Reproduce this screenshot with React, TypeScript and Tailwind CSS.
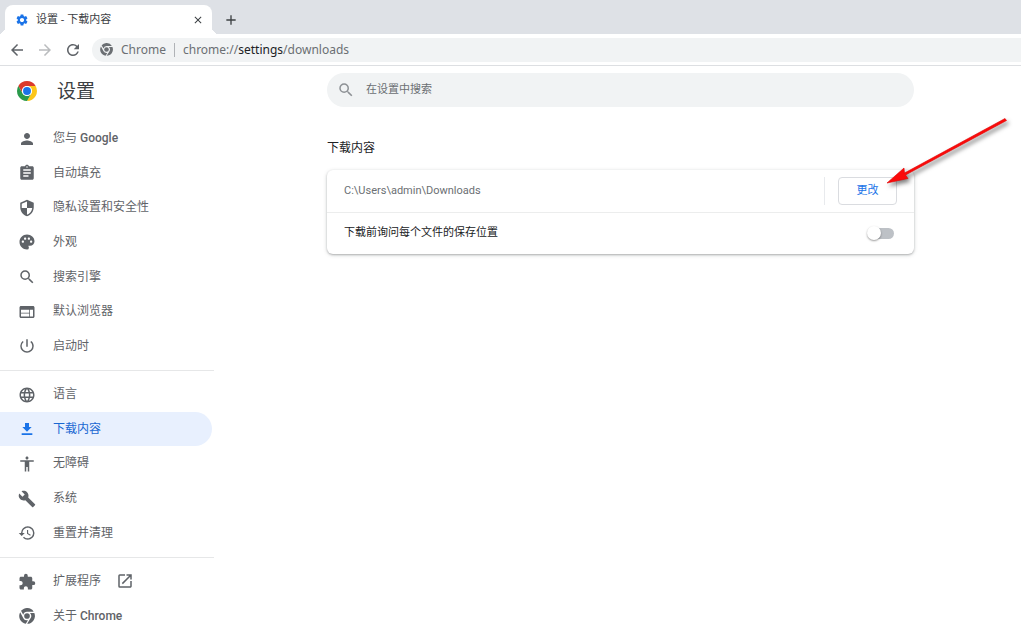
import type { ReactNode } from 'react';
import {
  MdAccessibility,
  MdArrowBack,
  MdArrowForward,
  MdAssignment,
  MdBuild,
  MdExtension,
  MdLanguage,
  MdOpenInNew,
  MdPalette,
  MdPerson,
  MdPowerSettingsNew,
  MdRefresh,
  MdRestore,
  MdSearch,
  MdSecurity,
  MdSettings,
  MdWeb,
  MdAdd,
  MdClose,
} from 'react-icons/md';

function ChromeMono({ className }: { className?: string }) {
  return (
    <svg viewBox="0 0 48 48" fill="currentColor" className={className} aria-hidden="true">
      <path d="M24 11H44A23.5 23.5 0 0 0 6 8.5L12.8 20.3A12 12 0 0 1 24 11Z" />
      <path d="M34.5 31L24.5 47.5A23.5 23.5 0 0 0 46 15H33A13 13 0 0 1 34.5 31Z" />
      <path d="M13 30.5L3.6 12.5A23.5 23.5 0 0 0 20.4 47.2L27 36.7A13 13 0 0 1 13 30.5Z" />
      <circle cx="24" cy="24" r="8.5" />
    </svg>
  );
}

function ChromeLogo() {
  return (
    <svg viewBox="0 0 48 48" className="size-5 shrink-0" aria-hidden="true">
      <circle cx="24" cy="24" r="24" fill="#fff" />
      <path d="M24 12H44.78A24 24 0 0 0 3.22 12L13.61 30A12 12 0 0 1 24 12Z" fill="#db3a2c" />
      <path d="M34.39 30L24 48A24 24 0 0 0 44.78 12H24A12 12 0 0 1 34.39 30Z" fill="#fcc61a" />
      <path d="M13.61 30L3.22 12A24 24 0 0 0 24 48L34.39 30A12 12 0 0 1 13.61 30Z" fill="#2a9a4b" />
      <circle cx="24" cy="24" r="12" fill="#fff" />
      <circle cx="24" cy="24" r="9.5" fill="#1a73e8" />
    </svg>
  );
}

function DownloadIcon({ className }: { className?: string }) {
  return (
    <svg viewBox="0 0 24 24" fill="currentColor" className={className} aria-hidden="true">
      <path d="M19 9h-4V3H9v6H5l7 7 7-7zM4 18.5v2.5h16v-2.5H4z" />
    </svg>
  );
}

type Item = { label: ReactNode; icon: ReactNode; active?: boolean; external?: boolean };

const groups: { height: string; items: Item[] }[] = [
  {
    height: 'min-h-[242px]',
    items: [
      { label: <>您与 <span className="font-medium">Google</span></>, icon: <MdPerson className="size-[18px]" /> },
      { label: '自动填充', icon: <MdAssignment className="size-[18px]" /> },
      { label: '隐私设置和安全性', icon: <MdSecurity className="size-[18px]" /> },
      { label: '外观', icon: <MdPalette className="size-[18px]" /> },
      { label: '搜索引擎', icon: <MdSearch className="size-[18px]" /> },
      { label: '默认浏览器', icon: <MdWeb className="size-[18px]" /> },
      { label: '启动时', icon: <MdPowerSettingsNew className="size-[18px]" /> },
    ],
  },
  {
    height: 'min-h-[173px]',
    items: [
      { label: '语言', icon: <MdLanguage className="size-[18px]" /> },
      { label: '下载内容', icon: <DownloadIcon className="m-px size-4" />, active: true },
      { label: '无障碍', icon: <MdAccessibility className="size-[18px]" /> },
      { label: '系统', icon: <MdBuild className="size-[18px]" /> },
      { label: '重置并清理', icon: <MdRestore className="size-[18px]" /> },
    ],
  },
  {
    height: 'min-h-[69px]',
    items: [
      { label: '扩展程序', icon: <MdExtension className="size-[18px]" />, external: true },
      { label: <>关于 <span className="font-medium">Chrome</span></>, icon: <ChromeMono className="m-px size-4" /> },
    ],
  },
];

function NavItem({ item }: { item: Item }) {
  return (
    <a
      href="#"
      aria-current={item.active ? 'page' : undefined}
      className={
        item.active
          ? 'mr-0.5 flex items-center gap-[17px] rounded-r-full bg-[#e8f0fe] pl-[18px] text-[#1a73e8]'
          : 'mr-0.5 flex items-center gap-[17px] pl-[18px] text-[#5f6368]'
      }
    >
      <span className="mt-px">{item.icon}</span>
      <span className={item.active ? 'text-[#1967d2]' : undefined}>{item.label}</span>
      {item.external && <MdOpenInNew className="-ml-0.5 size-[18px]" />}
    </a>
  );
}

function Pointer() {
  return (
    <svg
      viewBox="880 110 140 84"
      className="pointer-events-none absolute top-[-67px] left-[42px] h-[84px] w-[140px] max-w-none drop-shadow-[2px_3px_2px_rgba(0,0,0,0.5)]"
      aria-hidden="true"
    >
      <path d="M887 183L904 168L904.5 173L1005 118.5L1006.5 120.5L905.5 175L908 178.5Z" fill="#fa0a0a" stroke="#e00000" strokeWidth="0.6" />
    </svg>
  );
}

export default function App() {
  return (
    <div className="min-h-screen overflow-hidden bg-white font-['Roboto','Noto_Sans_CJK_SC',sans-serif] text-xs text-[#202124]">
      <div className="flex h-[34px] items-end bg-[#dee1e6] pl-[5px] font-['Noto_Sans','Noto_Sans_CJK_SC',sans-serif]">
        <div className="relative flex h-[29px] w-[207px] items-center rounded-t-lg bg-white pr-2 pl-2.5 text-[11px] before:absolute before:right-full before:bottom-0 before:size-[7px] before:bg-[radial-gradient(circle_at_top_left,transparent_7px,white_7px)] after:absolute after:bottom-0 after:left-full after:size-[7px] after:bg-[radial-gradient(circle_at_top_right,transparent_7px,white_7px)]">
          <MdSettings className="size-3.5 text-[#1a73e8]" />
          <span className="ml-[7px] flex-1 text-[#3c4043]">设置 - 下载内容</span>
          <button aria-label="关闭标签页" className="text-[#3c4043]">
            <MdClose className="size-3" />
          </button>
        </div>
        <button aria-label="新标签页" className="ml-[11px] flex h-[29px] items-center text-[#3c4043]">
          <MdAdd className="size-4" />
        </button>
      </div>

      <div className="flex h-8 items-center border-b border-[#dddfe2] pl-2 text-[#5f6368]">
        <button aria-label="后退"><MdArrowBack className="size-[18px]" /></button>
        <button aria-label="前进" className="ml-2.5 text-[#babcbe]"><MdArrowForward className="size-[18px]" /></button>
        <button aria-label="重新加载" className="ml-2.5"><MdRefresh className="size-[18px]" /></button>
        <div className="ml-2.5 flex h-6 flex-1 items-center rounded-l-full bg-[#f1f3f4] pl-2 font-['Noto_Sans','Noto_Sans_CJK_SC',sans-serif] text-[#6b6f73]">
          <ChromeMono className="size-[13px]" />
          <span className="ml-2">Chrome</span>
          <span className="mx-2 h-3.5 w-px bg-[#b0b3b7]" />
          <span>chrome://<span className="text-[#202124]">settings</span>/downloads</span>
        </div>
      </div>

      <div className="flex">
        <aside className="w-[214px] shrink-0">
          <div className="flex h-[50px] items-center gap-5 pl-[17px]">
            <ChromeLogo />
            <h1 className="pt-0.5 text-[19px] text-[#3c4043]">设置</h1>
          </div>
          <nav className="mt-[5px]">
            {groups.map((group, i) => (
              <div key={i} className={i > 0 ? 'mt-[7px] border-t border-[#e6e7e8] pt-1.5' : ''}>
                <div className={`grid auto-rows-fr ${group.height}`}>
                  {group.items.map((item, j) => (
                    <NavItem key={j} item={item} />
                  ))}
                </div>
              </div>
            ))}
          </nav>
        </aside>

        <main className="flex flex-1 justify-center pl-1.5">
          <div className="w-full max-w-[587px] pt-[7px]">
            <label className="flex h-[34px] items-center rounded-full bg-[#f1f3f4] pl-2.5 text-[11px]">
              <MdSearch className="size-[18px] text-[#8d9195]" />
              <input
                type="search"
                aria-label="在设置中搜索"
                placeholder="在设置中搜索"
                className="ml-[11px] flex-1 bg-transparent outline-none placeholder:text-[#6b6f73]"
              />
            </label>

            <h2 className="mt-[33px] leading-4">下载内容</h2>

            <section className="mt-3.5 rounded-md bg-white text-[11px] shadow-[0_1px_2px_rgba(60,64,67,0.3),0_1px_4px_rgba(60,64,67,0.2)]">
              <div className="flex h-[42px] items-center pr-[17px] pl-[17px]">
                <span className="flex-1 text-[#6b6f73]">C:\Users\admin\Downloads</span>
                <span className="mr-[13px] h-7 w-px bg-[#e8eaed]" />
                <div className="relative">
                  <button className="h-7 w-[59px] rounded border border-[#dadce0] text-[#1a73e8]">更改</button>
                  <Pointer />
                </div>
              </div>
              <label className="flex h-[42px] items-center border-t border-[#eceded] pr-5 pl-[17px]">
                <span className="flex-1">下载前询问每个文件的保存位置</span>
                <input
                  type="checkbox"
                  role="switch"
                  className="relative h-[11px] w-[26px] appearance-none rounded-full bg-[#bdc1c6] before:absolute before:-top-0.5 before:-left-px before:size-3.5 before:rounded-full before:bg-white before:shadow-[0_1px_2px_rgba(0,0,0,0.4)]"
                />
              </label>
            </section>
          </div>
        </main>
      </div>
    </div>
  );
}
